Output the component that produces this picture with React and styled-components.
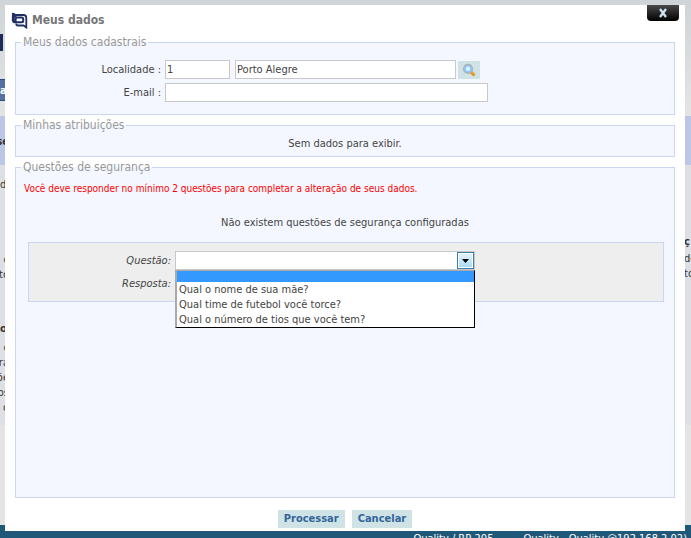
import React, { useState } from 'react'
import styled, { createGlobalStyle } from 'styled-components'

const questions = [
    '',
    'Qual o nome de sua mãe?',
    'Qual time de futebol você torce?',
    'Qual o número de tios que você tem?'
]

const LogoIcon = () => (
    <svg width="17" height="17" viewBox="0 0 17 17" fill="none" stroke="#1f2f63" aria-hidden="true">
        <path d="M5 3H12.500Q15.300 3 15.300 6V15.500L12.500 13.500H7Q5.200 13.500 5.200 11.500" strokeWidth="1.800" />
        <path d="M1 1Q2 .3 3.500 1.200L5.500 2.500V5H3.800V9H5.500V11.300H3.500Q1 11 .8 8Z" fill="#1f2f63" stroke="none" />
        <rect x="4.600" y="5.600" width="7.600" height="4.600" rx="1.500" fill="#fff" strokeWidth="2" />
    </svg>
)

const SearchIcon = () => (
    <svg width="14" height="14" viewBox="0 0 14 14" aria-hidden="true">
        <path d="M8.500 8.500l4 3.800" stroke="#e08a10" strokeWidth="3" />
        <path d="M8.500 8l4 3.800" stroke="#ffc23c" strokeWidth="1" />
        <circle cx="6" cy="5.800" r="4.500" fill="#8fc6fb" stroke="#b4b0b0" strokeWidth="1.200" />
        <circle cx="6" cy="5.800" r="2.200" fill="#d8f4ff" />
    </svg>
)

export default function App() {
    const [question, setQuestion] = useState('')

    let renderQuestions = () => {
        return questions.map((item) => (
            <Option key={item} role="option" aria-selected={item === question} $active={item === question} $blank={item === ''} onClick={() => setQuestion(item)}>
                {item}
            </Option>
        ))
    }

    return (
        <Page>
            <GlobalStyle />
            <Backdrop aria-hidden="true">
                <TopBar>
                    <LogoEdge />
                    <NavTab>a</NavTab>
                </TopBar>
                <Banner><LeftColumn><b>se</b></LeftColumn></Banner>
                <Content>
                    <LeftColumn>
                        <Paragraph $align="start">d</Paragraph>
                        <Paragraph $space={60}>c<br />to</Paragraph>
                        <Paragraph $space={39} $align="start"><b>o</b></Paragraph>
                        <Paragraph $space={4}>c<br />ra<br />õe<br />os<br />o</Paragraph>
                    </LeftColumn>
                    <RightColumn>
                        <Paragraph $space={57}><b>ç</b></Paragraph>
                        <Paragraph $space={2}>de<br />to</Paragraph>
                    </RightColumn>
                </Content>
                <Filler />
                <Footer>
                    <span>Quality / RP-205</span>
                    <span>Quality - Quality @192.168.2.02)</span>
                </Footer>
            </Backdrop>

            <Dialog role="dialog" aria-labelledby="title">
                <CloseButton aria-label="Fechar">
                    <svg width="10" height="10" viewBox="0 0 10 10"><path d="M2 1l6 8M8 1l-6 8" stroke="#cfe6f2" strokeWidth="2.300" /></svg>
                </CloseButton>
                <Header>
                    <LogoIcon />
                    <Title id="title">Meus dados</Title>
                </Header>
                <Group>
                    <Legend>Meus dados cadastrais</Legend>
                    <Fields>
                        <Row>
                            <Label htmlFor="localidade">Localidade :</Label>
                            <Input id="localidade" $width={65} defaultValue="1" />
                            <Input aria-label="Nome da localidade" $width={221} defaultValue="Porto Alegre" />
                            <SearchButton aria-label="Pesquisar"><SearchIcon /></SearchButton>
                        </Row>
                        <Row>
                            <Label htmlFor="email">E-mail :</Label>
                            <Input id="email" $width={323} />
                        </Row>
                    </Fields>
                </Group>
                <Group>
                    <Legend>Minhas atribuições</Legend>
                    <Empty>Sem dados para exibir.</Empty>
                </Group>
                <Group $grow>
                    <Legend>Questões de segurança</Legend>
                    <Warning>Você deve responder no mínimo 2 questões para completar a alteração de seus dados.</Warning>
                    <Notice>Não existem questões de segurança configuradas</Notice>
                    <Panel>
                        <Row>
                            <PanelLabel htmlFor="questao">Questão:</PanelLabel>
                            <SelectBox>
                                <Select id="questao" value={question} onChange={(e) => setQuestion(e.target.value)}>
                                    {questions.map((item) => <option key={item} value={item}>{item}</option>)}
                                </Select>
                                <Arrow><svg width="7" height="4" viewBox="0 0 7 4"><path d="M0 0h7L3.500 4z" fill="#000" /></svg></Arrow>
                                <OptionList role="listbox" aria-label="Questão">{renderQuestions()}</OptionList>
                            </SelectBox>
                        </Row>
                        <Row>
                            <PanelLabel htmlFor="resposta">Resposta:</PanelLabel>
                            <Input id="resposta" $width={300} />
                        </Row>
                    </Panel>
                </Group>
                <Actions>
                    <ActionButton>Processar</ActionButton>
                    <ActionButton>Cancelar</ActionButton>
                </Actions>
            </Dialog>
        </Page>
    )
}

const GlobalStyle = createGlobalStyle`
    * {
        box-sizing: border-box;
    }
    body {
        margin: 0;
    }
    body, input, select, button {
        font-family: Tahoma, "DejaVu Sans Condensed", "DejaVu Sans", sans-serif;
        font-size: 11px;
        color: #444;
    }
`
const Page = styled.div`
    position: relative;
    height: 100vh;
    overflow: hidden;
`
const Backdrop = styled.div`
    height: 100%;
    display: flex;
    flex-direction: column;
    background: #e4e4e4;
    line-height: 15px;
    color: #333;
`
const TopBar = styled.div`
    height: 116px;
    flex-shrink: 0;
    padding-top: 34px;
    background: linear-gradient(#cfd4d8, #e4e4e4);
`
const LogoEdge = styled.div`
    width: 3px;
    height: 17px;
    margin-bottom: 28px;
    background: #1c2b5c;
`
const NavTab = styled.div`
    width: 12px;
    height: 22px;
    border: 1px solid #2f4a80;
    border-left: none;
    background: #5670a0;
    color: #fff;
    font-weight: bold;
    line-height: 22px;
`
const Banner = styled.div`
    height: 49px;
    flex-shrink: 0;
    padding-top: 18px;
    background: #bcc6e6;
`
const Content = styled.div`
    height: 260px;
    flex-shrink: 0;
    display: flex;
    justify-content: space-between;
    padding-top: 12px;
    background: #dedfe4;
`
const LeftColumn = styled.div`
    width: 9px;
    display: flex;
    flex-direction: column;
    align-items: flex-end;
    text-align: right;
`
const RightColumn = styled.div`
    width: 7px;
`
const Paragraph = styled.div`
    align-self: ${(props) => props.$align || 'end'};
    margin-top: ${(props) => props.$space || 0}px;
`
const Filler = styled.div`
    flex: 1;
`
const Footer = styled.div`
    height: 13px;
    flex-shrink: 0;
    display: flex;
    justify-content: flex-end;
    gap: 30px;
    padding: 6px 4px 0 0;
    background: #1f5878;
    color: #fff;
    white-space: nowrap;
`
const Dialog = styled.div`
    position: absolute;
    inset: 5px 6px 7px 5px;
    display: flex;
    flex-direction: column;
    padding: 6px 10px 3px;
    background: #fff;
`
const CloseButton = styled.button`
    position: absolute;
    top: 0;
    right: 6px;
    width: 32px;
    height: 16px;
    padding: 0;
    display: flex;
    align-items: center;
    justify-content: center;
    border: none;
    border-radius: 0 0 4px 4px;
    background: linear-gradient(#4a4a4a, #000);
`
const Header = styled.div`
    height: 18px;
    display: flex;
    align-items: center;
    gap: 4px;
    margin: 0 0 6px -4px;
`
const Title = styled.h1`
    margin: 0;
    font-size: 12px;
    line-height: 18px;
    color: #777;
`
const Group = styled.fieldset`
    min-width: 0;
    margin: 0 0 3px;
    padding: 0 12px 8px;
    border: 1px solid #c9d7f5;
    background: #f4f7ff;
    flex: ${(props) => (props.$grow ? '1' : 'none')};
`
const Legend = styled.legend`
    margin-left: -7px;
    padding: 0 2px;
    font-size: 12px;
    line-height: 14px;
    color: #999;
`
const Fields = styled.div`
    padding-top: 11px;
`
const Row = styled.div`
    display: flex;
    align-items: center;
    margin-bottom: 4px;
`
const Label = styled.label`
    width: 133px;
    margin-right: 4px;
    text-align: right;
`
const PanelLabel = styled(Label)`
    width: 142px;
    font-style: italic;
`
const Input = styled.input`
    width: ${(props) => props.$width}px;
    height: 19px;
    margin-right: 5px;
    padding: 1px 1px;
    border: 1px solid #c8c8c8;
    border-radius: 0;
    background: #fff;
`
const SearchButton = styled.button`
    width: 22px;
    height: 18px;
    margin-left: -3px;
    padding: 0;
    display: flex;
    align-items: center;
    justify-content: center;
    border: none;
    background: #cfe2e6;
`
const Empty = styled.p`
    margin: 5px 0 -3px;
    line-height: 14px;
    text-align: center;
`
const Warning = styled.p`
    margin: 8px 0 20px -4px;
    font-size: 10px;
    line-height: 14px;
    color: #f00;
`
const Notice = styled.p`
    margin: 0 0 12px;
    line-height: 14px;
    text-align: center;
`
const Panel = styled.div`
    margin-right: -2px;
    padding: 8px 0 4px 0;
    border: 1px solid #c9d7f5;
    background: #eee;
`
const SelectBox = styled.div`
    position: relative;
    width: 300px;
`
const Select = styled.select`
    display: block;
    width: 100%;
    height: 19px;
    appearance: none;
    padding: 1px 20px 1px 2px;
    border: 1px solid #c8c8c8;
    border-radius: 0;
    background: #fff;
`
const Arrow = styled.span`
    position: absolute;
    top: 1px;
    right: 1px;
    width: 17px;
    height: 17px;
    display: flex;
    align-items: center;
    justify-content: center;
    border: 1px solid #3c7fb1;
    box-shadow: inset 0 0 0 1px #fff;
    background: linear-gradient(#e6f5fd, #a7d9f5);
    pointer-events: none;
`
const OptionList = styled.ul`
    position: absolute;
    top: 100%;
    left: 0;
    right: 0;
    margin: 0;
    padding: 0;
    list-style: none;
    border: 1px solid #000;
    border-top-color: #aaa;
    border-left: 2px solid #aaa;
    background: #fff;
`
const Option = styled.li`
    height: ${(props) => (props.$blank ? 11 : 15)}px;
    padding: 0 2px;
    line-height: 15px;
    background: ${(props) => (props.$active ? '#3399ff' : '#fff')};
`
const Actions = styled.div`
    display: flex;
    justify-content: center;
    gap: 7px;
    margin-top: 9px;
`
const ActionButton = styled.button`
    height: 18px;
    padding: 0 6px;
    border: none;
    background: #cfe2e6;
    color: #336699;
    font-size: 11px;
    font-weight: bold;
    line-height: 18px;
`
